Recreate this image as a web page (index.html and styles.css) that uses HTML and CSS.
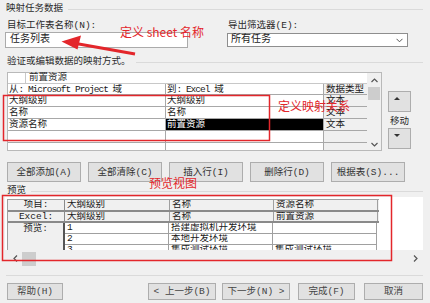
FILE: index.html
```html
<!DOCTYPE html>
<html lang="zh-CN">
<head>
<meta charset="utf-8">
<title>映射任务数据</title>
<link rel="stylesheet" href="styles.css">
</head>
<body>
<div class="dlg">
  <div class="grp"><span>映射任务数据</span><i class="rule"></i></div>

  <div class="fields">
    <div class="f-left">
      <div class="lbl">目标工作表名称(N):</div>
      <div class="input">任务列表</div>
    </div>
    <div class="f-right">
      <div class="lbl">导出筛选器(E):</div>
      <div class="select"><span>所有任务</span><svg class="chev" width="7" height="5" viewBox="0 0 7 5"><polyline points="0.5,0.8 3.5,3.8 6.5,0.8"/></svg></div>
    </div>
  </div>

  <div class="grp g2"><span>验证或编辑数据的映射方式。</span><i class="rule"></i></div>

  <div class="mapping">
    <div class="grid">
      <div class="gmain">
        <div class="erow"><div class="ecell"></div><div class="etext">前置资源</div></div>
        <div class="mrow hdr"><div class="c a">从<span class="m">: Microsoft Project </span>域</div><div class="c b">到<span class="m">: Excel </span>域</div><div class="c t">数据类型</div></div>
        <div class="mrow"><div class="c a">大纲级别</div><div class="c b">大纲级别</div><div class="c t">文本</div></div>
        <div class="mrow"><div class="c a">名称</div><div class="c b">名称</div><div class="c t">文本</div></div>
        <div class="mrow"><div class="c a">资源名称</div><div class="c b sel">前置资源</div><div class="c t">文本</div></div>
        <div class="mrow"><div class="c a"></div><div class="c b"></div><div class="c t"></div></div>
        <div class="mrow fill"><div class="c a"></div><div class="c b"></div><div class="c t"></div></div>
      </div>
      <div class="vscroll">
        <div class="sarr"><svg class="sv" width="7" height="5" viewBox="0 0 7 5"><polyline points="0.5,4 3.5,1 6.5,4"/></svg></div>
        <div class="thumb"></div>
        <div class="sarr dnarr"><svg class="sv" width="7" height="5" viewBox="0 0 7 5"><polyline points="0.5,1 3.5,4 6.5,1"/></svg></div>
      </div>
    </div>
    <div class="move">
      <div class="mbtn mup"><i class="tri tri-up"></i></div>
      <div class="mlbl">移动</div>
      <div class="mbtn mdn"><i class="tri tri-dn"></i></div>
    </div>
  </div>

  <div class="btnrow">
    <div class="btn">全部添加(A)</div>
    <div class="btn">全部清除(C)</div>
    <div class="btn">插入行(I)</div>
    <div class="btn">删除行(D)</div>
    <div class="btn">根据表(S)...</div>
  </div>

  <div class="grp g3"><span>预览</span><i class="rule"></i></div>

  <div class="preview">
    <div class="ptbl">
      <div class="prow ph1"><div>项目:</div><div>大纲级别</div><div>名称</div><div>资源名称</div></div>
      <div class="prow ph2"><div>Excel:</div><div>大纲级别</div><div>名称</div><div>前置资源</div></div>
      <div class="pbody">
        <div class="pcol1">预览:</div>
        <div class="pdata">
          <div class="drow"><div>1</div><div>搭建虚拟机开发环境</div><div></div></div>
          <div class="drow"><div>2</div><div>本地开发环境</div><div></div></div>
          <div class="drow"><div>3</div><div>集成测试环境</div><div>集成测试环境</div></div>
        </div>
      </div>
    </div>
    <div class="hs">
      <svg class="sv hl" width="5" height="7" viewBox="0 0 5 7"><polyline points="4,0.5 1,3.5 4,6.5"/></svg>
      <div class="hthumb"></div>
      <svg class="sv hr" width="5" height="7" viewBox="0 0 5 7"><polyline points="1,0.5 4,3.5 1,6.5"/></svg>
    </div>
  </div>

  <div class="sep"></div>

  <div class="footer">
    <div class="fbtn b-help">帮助(H)</div>
    <div class="fbtn b-prev">&lt; 上一步(B)</div>
    <div class="fbtn b-next">下一步(N) &gt;</div>
    <div class="fbtn b-done">完成(F)</div>
    <div class="fbtn b-cancel">取消</div>
  </div>

  <svg class="marks" width="430" height="303" viewBox="0 0 430 303">
    <rect x="3.5" y="95.5" width="266" height="45" />
    <rect x="2.5" y="195.5" width="389" height="65" />
    <line x1="135" y1="54" x2="76" y2="43.5" class="arrowline"/>
    <polygon points="61.5,41.5 81,35.5 77.5,49.5" class="arrowhead"/>
  </svg>
  <span class="ann ann1">定义 sheet 名称</span>
  <span class="ann ann2">定义映射关系</span>
  <span class="ann ann3">预览视图</span>
</div>
</body>
</html>
```

FILE: styles.css
```css
* { box-sizing: border-box; margin: 0; padding: 0; }
html, body { width: 430px; height: 303px; overflow: hidden; background: #f0f0f0; }
body {
  font-family: "Liberation Mono", "Noto Sans CJK SC", monospace;
  font-size: 9.5px;
  line-height: 11px;
  color: #2a2a2a;
}
.dlg { position: relative; width: 430px; height: 303px; padding: 3px 7px 0 6px; }

.grp { display: flex; align-items: center; height: 11px; gap: 5px; white-space: nowrap; }
.rule { flex: 1; height: 1px; background: #dadada; margin-top: 2px; }
.g2 { margin-top: 8px; padding-left: 1px; }
.g3 { margin-top: 3px; padding-left: 1px; }

.fields { display: flex; margin-top: 6px; }
.f-left { width: 183px; margin-left: -1px; }
.f-right { width: 181px; margin-left: 39px; }
.lbl { height: 11px; padding-left: 2px; white-space: nowrap; }
.f-right .lbl { padding-left: 1px; }
.input {
  margin-top: 1px; height: 16px; background: #fff; border: 1px solid #ababab;
  font-size: 10px; line-height: 14px; padding-left: 4px; color: #1a1a1a;
}
.select {
  margin-top: 2px; height: 14px; background: #fff; border: 1px solid #8e8e8e;
  font-size: 10px; line-height: 12px; padding: 0 4px 0 3px; color: #1a1a1a;
  display: flex; align-items: center; justify-content: space-between;
}
.chev { fill: none; stroke: #555; stroke-width: 1; }

.mapping { display: flex; margin-top: 5px; }
.grid { display: flex; width: 375px; height: 79px; margin-left: 1px; border: 1px solid #b9b9b9; background: #fff; }
.gmain { width: 359px; display: flex; flex-direction: column; }
.erow { display: flex; height: 11px; border-bottom: 1px solid #c8c8c8; }
.ecell { width: 18px; border-right: 1px solid #c8c8c8; }
.etext { padding-left: 3px; line-height: 10px; }
.mrow { display: grid; grid-template-columns: 157px 158px 44px; height: 12px; border-bottom: 1px solid #a8a8a8; }
.mrow.hdr { height: 11px; }
.mrow.fill { height: 7px; border-bottom: 0; }
.c { padding-left: 1px; line-height: 11px; white-space: nowrap; overflow: hidden; color: #1a1a1a; }
.c.b, .c.t { border-left: 1px solid #a8a8a8; }
.c.t { background: #f0f0f0; padding-left: 2px; }
.c.sel { background: #000; color: #fff; }
.m { letter-spacing: -1px; }

.vscroll { width: 14px; background: #f0f0f0; display: flex; flex-direction: column; align-items: center; }
.sarr { height: 14px; display: flex; align-items: center; justify-content: center; }
.dnarr { margin-top: auto; height: 12px; }
.sv { fill: none; stroke: #555; stroke-width: 1.2; }
.thumb { width: 12px; height: 13px; background: #cdcdcd; }

.move { margin-left: 6px; width: 23px; display: flex; flex-direction: column; }
.mbtn { width: 23px; height: 21px; background: #e1e1e1; border: 1px solid #adadad; padding: 5px 0 0 5px; }
.mup { margin-top: 19px; }
.mdn { margin-top: 1px; }
.mlbl { margin-top: 4px; height: 11px; text-align: center; }
.tri { display: block; width: 0; height: 0; border-left: 3px solid transparent; border-right: 3px solid transparent; }
.tri-up { border-bottom: 3px solid #333; }
.tri-dn { border-top: 3px solid #333; }

.btnrow { display: flex; gap: 7px; margin-top: 11px; padding-left: 1px; }
.btn {
  width: 74px; height: 20px; background: #e1e1e1; border: 1px solid #adadad;
  display: flex; align-items: center; justify-content: center; color: #333; white-space: nowrap;
}

.preview { margin-top: 1px; margin-left: -1px; width: 418px; height: 70px; background: #fff; padding: 2px 0 0 2px; }
.ptbl { height: 51px; overflow: hidden; width: 372px; border-top: 1px solid #a0a0a0; border-left: 1px solid #a0a0a0; }
.prow { display: grid; grid-template-columns: 57px 105px 104px 104px; background: #f0f0f0; }
.ph1 { height: 12px; border-bottom: 2px solid #8a8a8a; }
.ph2 { height: 11px; border-bottom: 2px solid #8a8a8a; }
.prow > div { border-right: 1px solid #a0a0a0; padding-left: 2px; line-height: 10px; white-space: nowrap; overflow: hidden; color: #1a1a1a; }
.prow > div:first-child { text-align: center; padding-left: 0; border-right: 1px solid #8a8a8a; }
.pbody { display: flex; }
.pcol1 { width: 57px; text-align: center; background: #f0f0f0; border-right: 2px solid #555; line-height: 10px; padding-top: 1px; height: 40px; }
.drow { display: grid; grid-template-columns: 104px 104px 104px; height: 11px; border-bottom: 1px solid #a0a0a0; background: #fff; }
.drow > div { border-right: 1px solid #a0a0a0; padding-left: 2px; line-height: 10px; white-space: nowrap; overflow: hidden; color: #1a1a1a; }

.hs { height: 17px; width: 418px; margin-left: -2px; display: flex; align-items: center; background: #f0f0f0; }
.hl { margin-left: 8px; }
.hthumb { width: 14px; height: 14px; background: #cdcdcd; margin-left: 4px; }
.hr { margin-left: auto; margin-right: 5px; }

.sep { height: 1px; background: #dadada; margin-top: 8px; }

.footer { display: flex; margin-top: 7px; }
.fbtn {
  height: 17px; background: #e1e1e1; border: 1px solid #adadad;
  display: flex; align-items: center; justify-content: center; color: #444; white-space: nowrap;
}
.b-help { width: 56px; margin-left: 1px; }
.b-prev { width: 68px; margin-left: 85px; }
.b-next { width: 68px; margin-left: 6px; }
.b-done { width: 57px; margin-left: 8px; }
.b-cancel { width: 59px; margin-left: 9px; }

.marks { position: absolute; left: 0; top: 0; pointer-events: none; }
.marks rect { fill: none; stroke: #e3262b; stroke-width: 1.5; }
.arrowline { stroke: #e3262b; stroke-width: 3; }
.arrowhead { fill: #e3262b; }
.ann {
  position: absolute; font-family: "Noto Sans CJK SC", sans-serif; font-size: 12px; line-height: 14px;
  color: #e3262b; white-space: nowrap;
}
.ann1 { left: 120px; top: 25px; }
.ann2 { left: 278px; top: 99px; }
.ann3 { left: 149px; top: 176px; }
```
